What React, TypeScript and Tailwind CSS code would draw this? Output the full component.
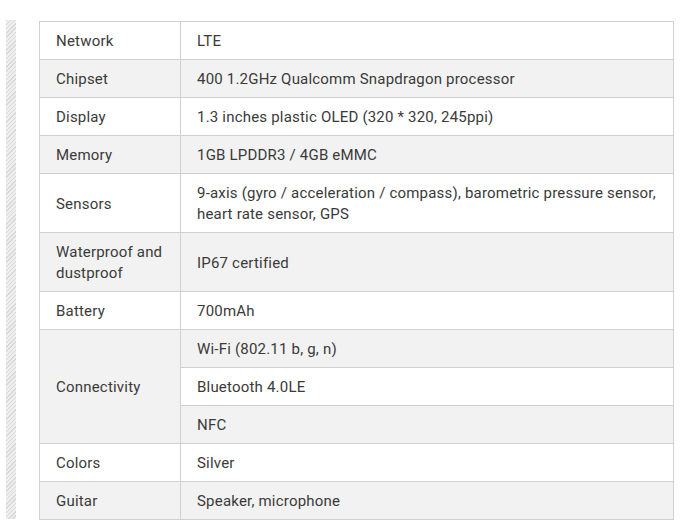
import React from "react";

type Row = { label: string; values: string[] };

const rows: Row[] = [
  { label: "Network", values: ["LTE"] },
  { label: "Chipset", values: ["400 1.2GHz Qualcomm Snapdragon processor"] },
  { label: "Display", values: ["1.3 inches plastic OLED (320 * 320, 245ppi)"] },
  { label: "Memory", values: ["1GB LPDDR3 / 4GB eMMC"] },
  {
    label: "Sensors",
    values: ["9-axis (gyro / acceleration / compass), barometric pressure sensor, heart rate sensor, GPS"],
  },
  { label: "Waterproof and dustproof", values: ["IP67 certified"] },
  { label: "Battery", values: ["700mAh"] },
  { label: "Connectivity", values: ["Wi-Fi (802.11 b, g, n)", "Bluetooth 4.0LE", "NFC"] },
  { label: "Colors", values: ["Silver"] },
  { label: "Guitar", values: ["Speaker, microphone"] },
];

export default function App() {
  return (
    <div
      className="flex min-h-[528px] bg-white pt-[20px] pl-[6px] text-[15px] leading-[21px] tracking-[0.2px] text-[#3a3a3a]"
      style={{ fontFamily: "Roboto, 'Liberation Sans', sans-serif" }}
    >
      <div className="w-[10px] h-[499px] bg-[repeating-linear-gradient(135deg,#d9d9d9_0px,#d9d9d9_1px,#eeeeee_1px,#eeeeee_3px)]" />
      <div className="ml-[23px] pt-[1px]">
        <table className="w-[635px] border-collapse border border-[#d0d0d0]">
          <tbody>
            {rows.map((r, i) => {
              const rowBg = i % 2 === 1 ? "bg-[#f2f2f2]" : "bg-white";
              return r.values.map((v, j) => {
                const subBg =
                  r.values.length > 1 ? (j % 2 === 0 ? "bg-[#f2f2f2]" : "bg-white") : rowBg;
                return (
                  <tr key={`${i}-${j}`}>
                    {j === 0 && (
                      <td
                        rowSpan={r.values.length}
                        className={`w-[141px] border border-[#d0d0d0] pl-[16px] pr-[12px] pt-[9px] pb-[7px] align-middle ${rowBg}`}
                      >
                        {r.label}
                      </td>
                    )}
                    <td
                      className={`border border-[#d0d0d0] pl-[16px] pr-[12px] pt-[9px] pb-[7px] align-middle ${subBg}`}
                    >
                      {v}
                    </td>
                  </tr>
                );
              });
            })}
          </tbody>
        </table>
      </div>
    </div>
  );
}
